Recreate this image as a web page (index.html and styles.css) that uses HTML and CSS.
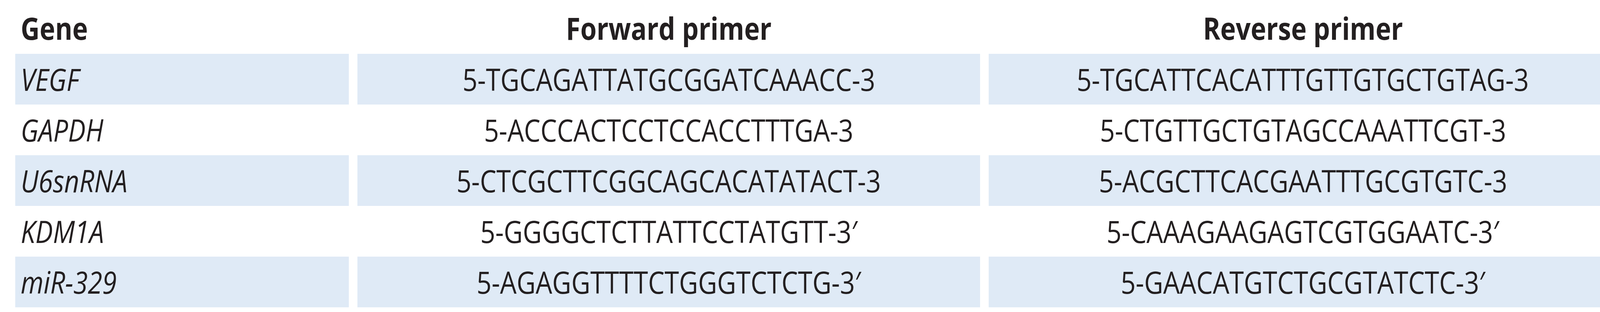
FILE: index.html
```html
<!DOCTYPE html>
<html lang="en">
<head>
<meta charset="utf-8">
<title>Primers</title>
<link rel="stylesheet" href="styles.css">
</head>
<body>
<div class="primers">
  <div class="cell head gene"><span class="txt">Gene</span></div>
  <div class="cell head"><span class="txt">Forward primer</span></div>
  <div class="cell head"><span class="txt">Reverse primer</span></div>

  <div class="cell gene shade"><span class="txt">VEGF</span></div>
  <div class="cell shade"><span class="txt">5-TGCAGATTATGCGGATCAAACC-3</span></div>
  <div class="cell shade"><span class="txt">5-TGCATTCACATTTGTTGTGCTGTAG-3</span></div>

  <div class="cell gene"><span class="txt">GAPDH</span></div>
  <div class="cell"><span class="txt">5-ACCCACTCCTCCACCTTTGA-3</span></div>
  <div class="cell"><span class="txt">5-CTGTTGCTGTAGCCAAATTCGT-3</span></div>

  <div class="cell gene shade"><span class="txt">U6snRNA</span></div>
  <div class="cell shade"><span class="txt">5-CTCGCTTCGGCAGCACATATACT-3</span></div>
  <div class="cell shade"><span class="txt">5-ACGCTTCACGAATTTGCGTGTC-3</span></div>

  <div class="cell gene"><span class="txt">KDM1A</span></div>
  <div class="cell"><span class="txt">5-GGGGCTCTTATTCCTATGTT-3′</span></div>
  <div class="cell"><span class="txt">5-CAAAGAAGAGTCGTGGAATC-3′</span></div>

  <div class="cell gene shade"><span class="txt">miR-329</span></div>
  <div class="cell shade"><span class="txt">5-AGAGGTTTTCTGGGTCTCTG-3′</span></div>
  <div class="cell shade"><span class="txt">5-GAACATGTCTGCGTATCTC-3′</span></div>
</div>
</body>
</html>
```

FILE: styles.css
```css
html, body {
  margin: 0;
  padding: 0;
  background: #ffffff;
}

.primers {
  display: grid;
  grid-template-columns: 854px 1594px 1609px;
  column-gap: 22px;
  margin-left: 39px;
  font-family: "Open Sans", "Noto Sans", sans-serif;
  font-size: 78px;
  color: #231f20;
}

.cell {
  box-sizing: border-box;
  height: 130px;
  line-height: 130px;
  text-align: center;
  white-space: nowrap;
  overflow: visible;
}

.cell.head {
  height: 138px;
  padding-top: 6px;
  line-height: 132px;
  font-weight: 700;
}

.cell.shade {
  background: #dfeaf6;
}

.txt {
  display: inline-block;
  transform: scaleX(0.86);
  transform-origin: center center;
}

.cell.gene {
  text-align: left;
  padding-left: 14px;
}

.cell.gene .txt {
  transform-origin: left center;
}

.cell.gene:not(.head) {
  font-style: italic;
}
```
